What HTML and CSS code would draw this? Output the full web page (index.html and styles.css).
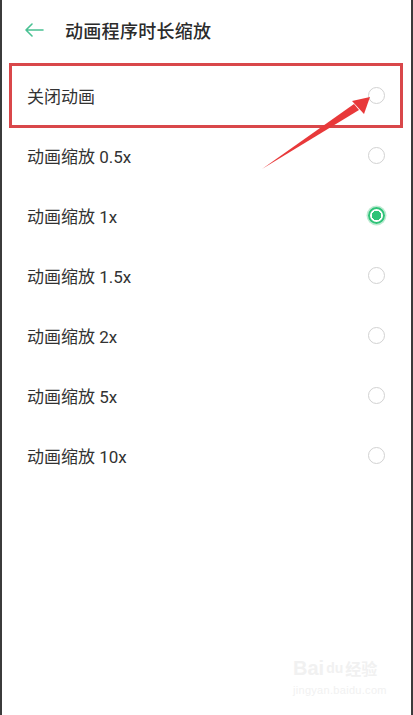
FILE: index.html
```html
<!DOCTYPE html>
<html lang="zh">
<head>
<meta charset="utf-8">
<link rel="stylesheet" href="styles.css">
</head>
<body>
<div class="frame">
  <header class="header">
    <svg class="back" width="20" height="14" viewBox="0 0 20 14"><path d="M19 7H2M8 1L2 7l6 6" fill="none" stroke="#49c193" stroke-width="1.6" stroke-linecap="round" stroke-linejoin="round"/></svg>
    <h1 class="title">动画程序时长缩放</h1>
  </header>
  <ul class="list">
    <li class="row"><span class="label">关闭动画</span><span class="radio"></span></li>
    <li class="row"><span class="label">动画缩放 0.5x</span><span class="radio"></span></li>
    <li class="row"><span class="label">动画缩放 1x</span><span class="radio on"></span></li>
    <li class="row"><span class="label">动画缩放 1.5x</span><span class="radio"></span></li>
    <li class="row"><span class="label">动画缩放 2x</span><span class="radio"></span></li>
    <li class="row"><span class="label">动画缩放 5x</span><span class="radio"></span></li>
    <li class="row"><span class="label">动画缩放 10x</span><span class="radio"></span></li>
  </ul>
  <div class="highlight"></div>
  <svg class="pointer" width="413" height="200" viewBox="0 0 413 200">
    <path d="M262 169 L354 104 L359 110 Z" fill="#e8393a"/>
    <path d="M370 97 L352 101 L364 114 Z" fill="#e8393a"/>
  </svg>
  <div class="watermark">
    <div class="wm-top"><span class="wm-bai">Bai</span><span class="wm-paw">du</span><span class="wm-jy">经验</span></div>
    <div class="wm-url">jingyan.baidu.com</div>
  </div>
</div>
</body>
</html>
```
FILE: styles.css
```css
html, body {
  margin: 0;
  padding: 0;
  background: #ffffff;
}
body {
  font-family: "Roboto", "Noto Sans CJK SC", sans-serif;
  color: #333333;
}
.frame {
  position: relative;
  box-sizing: border-box;
  width: 413px;
  height: 715px;
  border-left: 2px solid #3b3b3b;
  border-right: 2px solid #3b3b3b;
  overflow: hidden;
}
.header {
  height: 60px;
  display: flex;
  align-items: center;
  padding-left: 22px;
}
.back {
  margin-right: 21px;
}
.title {
  margin: 0;
  font-size: 18px;
  font-weight: 500;
  color: #2b2b2b;
  letter-spacing: 0.3px;
}
.list {
  list-style: none;
  margin: 0;
  padding: 5px 0 0 0;
}
.row {
  height: 60px;
  display: flex;
  align-items: center;
  justify-content: space-between;
  padding: 0 26px 0 25px;
}
.label {
  font-size: 17px;
  color: #333333;
}
.radio {
  box-sizing: border-box;
  width: 17px;
  height: 17px;
  border-radius: 50%;
  border: 1.5px solid #d2d2d2;
}
.radio.on {
  border: 2px solid #2fc378;
  box-shadow: 0 0 0 1.5px #bdebd2;
  background: radial-gradient(circle, #2fc378 0 4.5px, #ffffff 5px);
}
.highlight {
  position: absolute;
  left: 7px;
  top: 63px;
  width: 394px;
  height: 65px;
  box-sizing: border-box;
  border: 3px solid #d9474a;
}
.pointer {
  position: absolute;
  left: -2px;
  top: 0;
}
.watermark {
  position: absolute;
  left: 291px;
  top: 656px;
  color: #f1f1f1;
  font-family: "Liberation Sans", sans-serif;
}
.wm-top {
  display: flex;
  align-items: flex-end;
  gap: 2px;
  font-size: 20px;
  font-weight: bold;
  line-height: 24px;
}
.wm-paw {
  font-size: 14px;
}
.wm-jy {
  font-family: "Noto Sans CJK SC", sans-serif;
  font-size: 16px;
}
.wm-url {
  font-size: 11px;
  margin-top: 4px;
  letter-spacing: 0.3px;
}
```
